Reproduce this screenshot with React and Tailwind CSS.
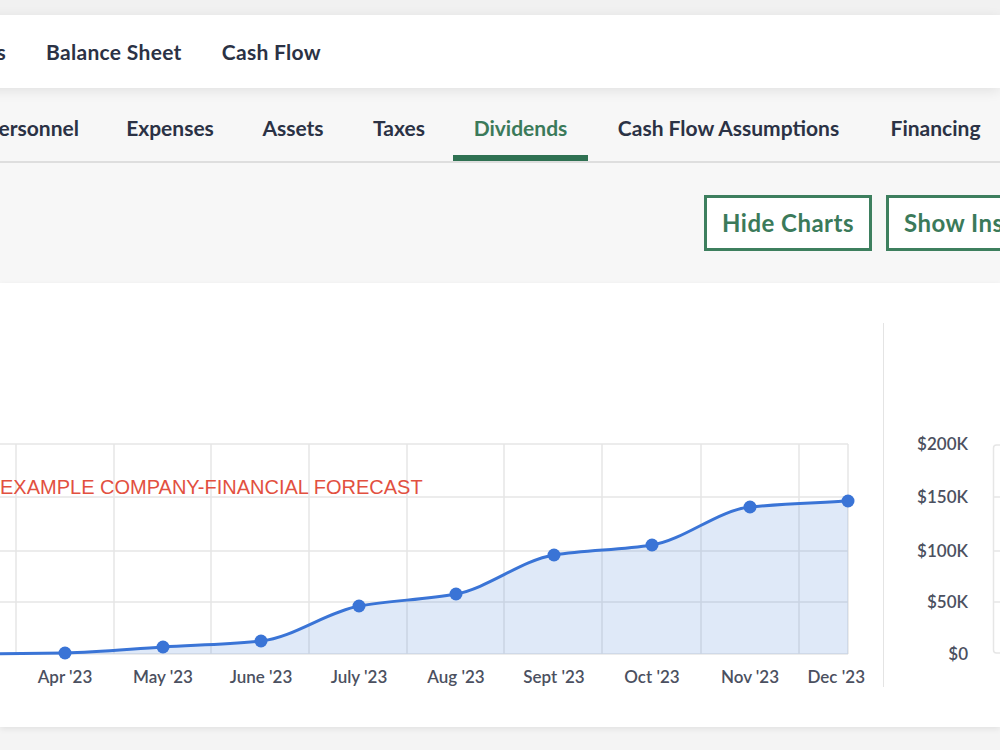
import React from "react";

const TOP_LINKS = [
  { label: "Profit & Loss", w: "w-[130px] text-right" },
  { label: "Balance Sheet", w: "" },
  { label: "Cash Flow", w: "" },
];

const TABS = [
  { label: "Personnel", w: "w-[133px]" },
  { label: "Expenses", w: "w-[130px]" },
  { label: "Assets", w: "w-[104px]" },
  { label: "Taxes", w: "w-[96px]" },
  { label: "Dividends", w: "w-[135px]", active: true },
  { label: "Cash Flow Assumptions", w: "w-[269px]" },
  { label: "Financing", w: "w-[133px]" },
];

// page coords minus card top (283)
const POINTS = [
  { x: -33, y: 371, label: "" },
  { x: 65, y: 370, label: "Apr '23" },
  { x: 163, y: 364, label: "May '23" },
  { x: 261, y: 358, label: "June '23" },
  { x: 359, y: 323, label: "July '23" },
  { x: 456, y: 311, label: "Aug '23" },
  { x: 554, y: 272, label: "Sept '23" },
  { x: 652, y: 262, label: "Oct '23" },
  { x: 750, y: 224, label: "Nov '23" },
  { x: 848, y: 218, label: "Dec '23" },
];

const H_LINES = [161, 214, 268, 319, 371];
const V_LINES = [16, 114, 211, 309, 407, 504, 602, 701, 799, 848];
const Y_LABELS = ["$200K", "$150K", "$100K", "$50K", "$0"];

function monotonePath(pts) {
  const n = pts.length;
  const dx = [], m = [], t = [];
  for (let i = 0; i < n - 1; i++) {
    dx.push(pts[i + 1].x - pts[i].x);
    m.push((pts[i + 1].y - pts[i].y) / dx[i]);
  }
  t[0] = m[0];
  t[n - 1] = m[n - 2];
  for (let i = 1; i < n - 1; i++) {
    t[i] = m[i - 1] * m[i] <= 0 ? 0 : (2 * m[i - 1] * m[i]) / (m[i - 1] + m[i]);
  }
  let d = `M${pts[0].x},${pts[0].y}`;
  for (let i = 0; i < n - 1; i++) {
    const h = dx[i] / 3;
    d += ` C${pts[i].x + h},${pts[i].y + t[i] * h} ${pts[i + 1].x - h},${pts[i + 1].y - t[i + 1] * h} ${pts[i + 1].x},${pts[i + 1].y}`;
  }
  return d;
}

function MainChart() {
  const line = monotonePath(POINTS);
  const area = `${line} L848,371 L-33,371 Z`;
  return (
    <svg width="883" height="444" className="block shrink-0">
      {H_LINES.map((y) => (
        <line key={y} x1="-90" x2="848" y1={y} y2={y} stroke="#e6e6e6" strokeWidth="1.5" />
      ))}
      {V_LINES.map((x) => (
        <line key={x} x1={x} x2={x} y1="161" y2="371" stroke="#e6e6e6" strokeWidth="1.5" />
      ))}
      <path d={area} fill="rgba(58,116,214,0.16)" />
      <path d={line} fill="none" stroke="#3a74d6" strokeWidth="3" />
      {POINTS.slice(1).map((p) => (
        <circle key={p.x} cx={p.x} cy={p.y} r="6.5" fill="#3a74d6" />
      ))}
      {POINTS.slice(1).map((p, i) => (
        <text
          key={p.label}
          x={i === 8 ? 865 : p.x}
          y="400"
          textAnchor={i === 8 ? "end" : "middle"}
          fill="#4b5060"
          fontSize="17"
          fontWeight="600"
          fontFamily="Lato, sans-serif"
        >
          {p.label}
        </text>
      ))}
      <text x="0" y="211" fill="#e2503f" fontSize="20" fontFamily="'Liberation Sans', Arial, sans-serif">
        EXAMPLE COMPANY-FINANCIAL FORECAST
      </text>
    </svg>
  );
}

function SideChart() {
  return (
    <svg width="116" height="444" className="block shrink-0">
      {Y_LABELS.map((l, i) => (
        <text
          key={l}
          x="84"
          y={H_LINES[i] + 6}
          textAnchor="end"
          fill="#4b5060"
          fontSize="17"
          fontWeight="600"
          fontFamily="Lato, sans-serif"
        >
          {l}
        </text>
      ))}
      <rect x="109.5" y="162" width="60" height="208" rx="3" fill="none" stroke="#e6e6e6" strokeWidth="1.5" />
      {H_LINES.slice(1, 4).map((y) => (
        <line key={y} x1="109" x2="130" y1={y} y2={y} stroke="#e6e6e6" strokeWidth="1.5" />
      ))}
    </svg>
  );
}

export default function App() {
  return (
    <div className="w-[1000px] h-[750px] overflow-hidden bg-[#f4f4f4] font-['Lato',sans-serif] text-[#2b3245]">
      <div className="h-[15px] bg-[#f1f1f1]" />
      <nav className="relative z-10 h-[73px] bg-white shadow-[0_3px_12px_rgba(0,0,0,0.09)] flex items-center gap-[40px] -ml-[124px]">
        {TOP_LINKS.map((l) => (
          <span key={l.label} className={`${l.w} shrink-0 whitespace-nowrap text-[21px] tracking-[0.015em] font-bold`}>
            {l.label}
          </span>
        ))}
      </nav>
      <div className="h-[75px] bg-[#f7f7f7] border-b-2 border-[#dedede] flex items-end gap-[6px] -ml-[34px]">
        {TABS.map((t) => (
          <div key={t.label} className={`${t.w} shrink-0 flex flex-col items-center`}>
            <span
              className={`leading-[24px] text-[21px] font-bold whitespace-nowrap ${
                t.active ? "text-[#3b7a5a]" : ""
              }`}
            >
              {t.label}
            </span>
            <div className={`mt-[15px] h-[6px] w-full ${t.active ? "bg-[#2f7152]" : ""}`} />
          </div>
        ))}
      </div>
      <div className="h-[120px] bg-[#f7f7f7] flex items-center gap-[14px] pl-[704px]">
        <button className="shrink-0 w-[168px] h-[56px] border-[3px] border-[#3d7f5e] bg-white text-[#3b7a5a] text-[24px] tracking-[0.02em] font-bold whitespace-nowrap">
          Hide Charts
        </button>
        <button className="shrink-0 w-[200px] h-[56px] border-[3px] border-[#3d7f5e] bg-white text-[#3b7a5a] text-[24px] tracking-[0.02em] font-bold whitespace-nowrap text-left pl-[15px]">
          Show Insights
        </button>
      </div>
      <div className="h-[444px] bg-white shadow-[0_2px_6px_rgba(0,0,0,0.08)] flex">
        <MainChart />
        <div className="w-px h-[364px] mt-[40px] bg-[#e4e4e4] shrink-0" />
        <SideChart />
      </div>
    </div>
  );
}
